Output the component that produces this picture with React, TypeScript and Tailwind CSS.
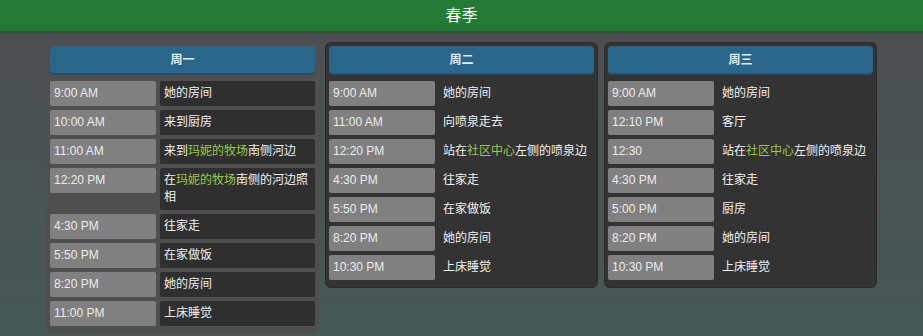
import React from 'react';

type Part = string | { hl: string };

interface Entry {
  time: string;
  text: Part[];
}

interface Day {
  name: string;
  entries: Entry[];
}

const days: Day[] = [
  {
    name: '周一',
    entries: [
      { time: '9:00 AM', text: ['她的房间'] },
      { time: '10:00 AM', text: ['来到厨房'] },
      { time: '11:00 AM', text: ['来到', { hl: '玛妮的牧场' }, '南侧河边'] },
      { time: '12:20 PM', text: ['在', { hl: '玛妮的牧场' }, '南侧的河边照', '相'] },
      { time: '4:30 PM', text: ['往家走'] },
      { time: '5:50 PM', text: ['在家做饭'] },
      { time: '8:20 PM', text: ['她的房间'] },
      { time: '11:00 PM', text: ['上床睡觉'] },
    ],
  },
  {
    name: '周二',
    entries: [
      { time: '9:00 AM', text: ['她的房间'] },
      { time: '11:00 AM', text: ['向喷泉走去'] },
      { time: '12:20 PM', text: ['站在', { hl: '社区中心' }, '左侧的喷泉边'] },
      { time: '4:30 PM', text: ['往家走'] },
      { time: '5:50 PM', text: ['在家做饭'] },
      { time: '8:20 PM', text: ['她的房间'] },
      { time: '10:30 PM', text: ['上床睡觉'] },
    ],
  },
  {
    name: '周三',
    entries: [
      { time: '9:00 AM', text: ['她的房间'] },
      { time: '12:10 PM', text: ['客厅'] },
      { time: '12:30', text: ['站在', { hl: '社区中心' }, '左侧的喷泉边'] },
      { time: '4:30 PM', text: ['往家走'] },
      { time: '5:00 PM', text: ['厨房'] },
      { time: '8:20 PM', text: ['她的房间'] },
      { time: '10:30 PM', text: ['上床睡觉'] },
    ],
  },
];

const DayColumn: React.FC<{ day: Day; active: boolean }> = ({ day, active }) => (
  <div
    className={`w-[273px] rounded-[6px] border p-[3px] pb-[7px] ${
      active ? 'bg-[#4f4f4f] border-[#4f4f4f]' : 'bg-[#333333] border-[#2a2a2a]'
    }`}
  >
    {/* Day header */}
    <div className="h-[27px] rounded-[4px] bg-[#2a6689] shadow-[0_2px_0_#22516d] flex items-center justify-center text-[12px] font-bold text-[#e2eaf0]">
      {day.name}
    </div>

    {/* Entries */}
    <div className="mt-[8px] flex flex-col gap-[4px]">
      {day.entries.map((entry, i) => (
        <div key={i} className="flex items-start gap-[4px]">
          <div className="w-[106px] shrink-0 h-[25px] leading-[25px] px-[4px] rounded-[2px] bg-[#808080] text-[12px] text-[#ececec]">
            {entry.time}
          </div>
          <div
            className={`flex-1 min-w-0 px-[4px] py-[4px] leading-[17px] rounded-[2px] text-[12px] text-[#f0f0f0] ${
              active ? 'bg-[#2f2f2f]' : ''
            }`}
          >
            {entry.text.map((p, j) =>
              typeof p === 'string' ? (
                <span key={j}>{p}</span>
              ) : (
                <span key={j} className="text-[#9cc94a]">
                  {p.hl}
                </span>
              )
            )}
          </div>
        </div>
      ))}
    </div>
  </div>
);

export default function App() {
  return (
    <div
      className="h-[336px] overflow-hidden bg-gradient-to-b from-[#4d4e52] to-[#455955]"
      style={{ fontFamily: '"Liberation Sans", "Noto Sans CJK SC", sans-serif' }}
    >
      {/* Season bar */}
      <div className="h-[31px] bg-[#237a35] shadow-[0_3px_0_#34513b] flex items-center justify-center text-[16px] text-white">
        春季
      </div>

      {/* Columns */}
      <div className="mt-[11px] flex justify-center items-start gap-[6px]">
        {days.map((day, i) => (
          <DayColumn key={day.name} day={day} active={i === 0} />
        ))}
      </div>
    </div>
  );
}
